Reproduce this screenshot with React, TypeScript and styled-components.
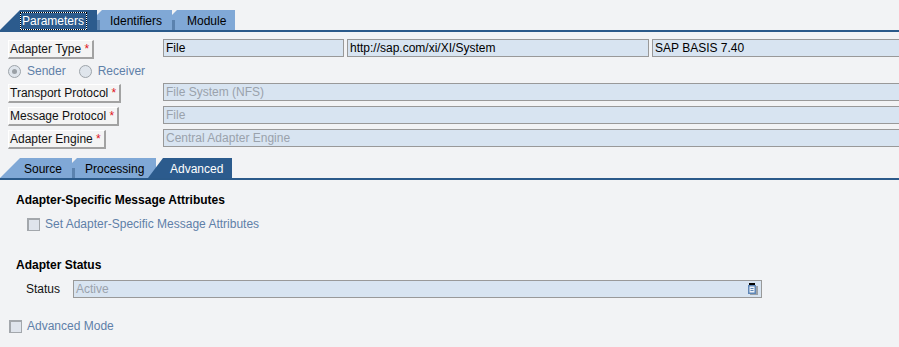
import React from "react";
import styled, { createGlobalStyle } from "styled-components";

const GlobalStyle = createGlobalStyle`
  html, body {
    margin: 0;
    padding: 0;
    background: #f2f3f5;
  }
  body {
    font-family: "Liberation Sans", Arial, sans-serif;
    font-size: 12px;
    color: #000;
    overflow: hidden;
  }
`

const Page = styled.div`
  width: 899px;
  min-height: 347px;
  padding-top: 10px;
  box-sizing: border-box;
  overflow: hidden;
`

// TABS

const TabStrip = styled.div<{ $top?: number }>`
  display: flex;
  height: 20px;
  margin-top: ${p => p.$top || 0}px;
  border-bottom: 2px solid #2b5a8a;
`

const Tab = styled.div<{ $active?: boolean; $lead?: boolean; $w: number; $pad: number; $overlap?: number }>`
  position: relative;
  box-sizing: border-box;
  flex: none;
  width: ${p => p.$w}px;
  height: 20px;
  margin-left: ${p => -(p.$overlap || 0)}px;
  padding-left: ${p => p.$pad}px;
  line-height: 22px;
  background: ${p => p.$active ? '#2c5b8d' : '#80a8d6'};
  color: ${p => p.$active ? '#fff' : '#000'};
  z-index: ${p => p.$active ? 2 : 1};
  clip-path: ${p => p.$lead
    ? `polygon(${p.$overlap ? 15 : 20}px 0, 100% 0, 100% 100%, 0 100%)`
    : 'polygon(5px 0, 100% 0, 100% 100%, 0 100%, 0 5px)'};

  &::before {
    content: "";
    display: ${p => p.$lead || p.$active ? 'none' : 'block'};
    position: absolute;
    left: 0;
    top: 10px;
    bottom: 0;
    width: 3px;
    background: #5b82ae;
  }
`

const Focused = styled.span`
  display: inline-block;
  height: 16px;
  line-height: 17px;
  padding: 0 2px 0 1px;
  margin-left: -2px;
  outline: 1px dotted #000;
  box-shadow: 0 0 0 1px #fff;
`

// FORM

const Form = styled.div`
  display: flex;
  flex-direction: column;
  gap: 5px;
  padding: 7px 0 0 8px;
`

const Row = styled.div<{ $h?: number }>`
  display: flex;
  align-items: flex-start;
  height: ${p => p.$h || 18}px;
`

const LabelCell = styled.div<{ $w: number }>`
  flex: none;
  width: ${p => p.$w}px;
`

const LabelButton = styled.span`
  display: inline-block;
  box-sizing: border-box;
  height: 19px;
  margin-top: 1px;
  padding: 0 3px 0 1px;
  line-height: 17px;
  background: #f4f4f4;
  border-top: 1px solid #fff;
  border-left: 1px solid #fff;
  border-right: 2px solid #a2a2a2;
  border-bottom: 2px solid #a2a2a2;
  color: #111;
  white-space: nowrap;
`

const Req = styled.span`
  color: #e0141e;
`

const Field = styled.div<{ $w?: number; $muted?: boolean; $bleed?: boolean }>`
  position: relative;
  box-sizing: border-box;
  flex: ${p => p.$w ? 'none' : '1'};
  width: ${p => p.$w ? `${p.$w}px` : 'auto'};
  height: 18px;
  margin-right: ${p => p.$bleed ? -4 : 0}px;
  padding: 0 2px;
  border: 1px solid #999;
  background: #d8e4f1;
  line-height: 16px;
  color: ${p => p.$muted ? '#9aa2ac' : '#000'};
  white-space: nowrap;
  overflow: hidden;
`

const Fields = styled.div`
  display: flex;
  gap: 3px;
  flex: 1;
  min-width: 0;
`

const Choice = styled.label<{ $gap?: number }>`
  display: inline-flex;
  align-items: center;
  gap: ${p => p.$gap || 6}px;
  height: 16px;
  color: #5f80a8;
  white-space: nowrap;
`

const RadioDot = styled.span<{ $on?: boolean }>`
  position: relative;
  box-sizing: border-box;
  width: 13px;
  height: 13px;
  border-radius: 50%;
  border: 1px solid #9ea4aa;
  background: #dfe5ec;

  &::after {
    content: "";
    display: ${p => p.$on ? 'block' : 'none'};
    position: absolute;
    left: 3px;
    top: 3px;
    width: 5px;
    height: 5px;
    border-radius: 50%;
    background: #9aa0a6;
  }
`

const Box = styled.span`
  box-sizing: border-box;
  width: 13px;
  height: 13px;
  border: 2px solid #a3a7ac;
  border-right-width: 1px;
  border-bottom-width: 1px;
  background: #dfe4ec;
`

const RadioRow = styled.div`
  display: flex;
  gap: 13px;
  height: 16px;
  margin-top: 1px;
  margin-bottom: -1px;
`

// ADVANCED

const Section = styled.div<{ $top: number }>`
  margin-top: ${p => p.$top}px;
  padding-left: 16px;
`

const Heading = styled.div`
  font-weight: bold;
  line-height: 14px;
  color: #000;
`

const Indent = styled.div<{ $top: number; $left: number }>`
  display: flex;
  align-items: center;
  margin-top: ${p => p.$top}px;
  padding-left: ${p => p.$left}px;
`

const StatusLabel = styled.span`
  width: 47px;
  color: #111;
`

const ClipIcon = styled.svg`
  position: absolute;
  right: 3px;
  top: 2px;
`

const Clipboard = () => (
  <ClipIcon width="10" height="12" viewBox="0 0 10 12">
    <rect x="2" y="3" width="8" height="9" fill="#9ba1a7" />
    <rect x="0" y="2" width="8" height="9" fill="#5f87b7" />
    <rect x="1.5" y="3.5" width="5" height="6" fill="#eef2f7" />
    <rect x="2.5" y="5" width="3" height="1" fill="#5f87b7" />
    <rect x="2.5" y="7" width="3" height="1" fill="#5f87b7" />
    <rect x="1" y="0" width="6" height="2" fill="#000" />
  </ClipIcon>
)

export default function App() {
  return (
    <Page>
      <GlobalStyle />
      <TabStrip>
        <Tab $active $lead $w={97} $pad={23}><Focused>Parameters</Focused></Tab>
        <Tab $w={75} $pad={13}>Identifiers</Tab>
        <Tab $w={63} $pad={15}>Module</Tab>
      </TabStrip>

      <Form>
        <Row>
          <LabelCell $w={155}><LabelButton>Adapter Type <Req>*</Req></LabelButton></LabelCell>
          <Fields>
            <Field $w={181}>File</Field>
            <Field $w={302}>http://sap.com/xi/XI/System</Field>
            <Field $bleed>SAP BASIS 7.40</Field>
          </Fields>
        </Row>
        <RadioRow>
          <Choice><RadioDot $on />Sender</Choice>
          <Choice><RadioDot />Receiver</Choice>
        </RadioRow>
        <Row>
          <LabelCell $w={155}><LabelButton>Transport Protocol <Req>*</Req></LabelButton></LabelCell>
          <Field $muted $bleed>File System (NFS)</Field>
        </Row>
        <Row>
          <LabelCell $w={155}><LabelButton>Message Protocol <Req>*</Req></LabelButton></LabelCell>
          <Field $muted $bleed>File</Field>
        </Row>
        <Row>
          <LabelCell $w={155}><LabelButton>Adapter Engine <Req>*</Req></LabelButton></LabelCell>
          <Field $muted $bleed>Central Adapter Engine</Field>
        </Row>
      </Form>

      <TabStrip $top={11}>
        <Tab $lead $w={72} $pad={24}>Source</Tab>
        <Tab $w={84} $pad={13}>Processing</Tab>
        <Tab $active $lead $overlap={8} $w={84} $pad={22}>Advanced</Tab>
      </TabStrip>

      <Section $top={13}>
        <Heading>Adapter-Specific Message Attributes</Heading>
        <Indent $top={9} $left={11}>
          <Choice $gap={5}><Box />Set Adapter-Specific Message Attributes</Choice>
        </Indent>
      </Section>

      <Section $top={26}>
        <Heading>Adapter Status</Heading>
        <Indent $top={8} $left={10}>
          <StatusLabel>Status</StatusLabel>
          <Field $w={689} $muted>Active<Clipboard /></Field>
        </Indent>
      </Section>

      <Indent $top={20} $left={9}>
        <Choice $gap={5}><Box />Advanced Mode</Choice>
      </Indent>
    </Page>
  );
}
